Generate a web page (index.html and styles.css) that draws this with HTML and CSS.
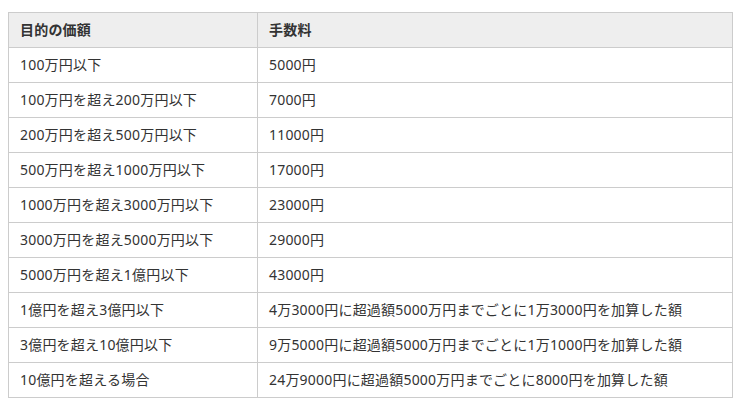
FILE: index.html
```html
<!DOCTYPE html>
<html lang="ja">
<head>
<meta charset="utf-8">
<link rel="stylesheet" href="styles.css">
</head>
<body>
<table class="fee-table">
  <thead>
    <tr><th class="col1">目的の価額</th><th>手数料</th></tr>
  </thead>
  <tbody>
    <tr><td>100万円以下</td><td>5000円</td></tr>
    <tr><td>100万円を超え200万円以下</td><td>7000円</td></tr>
    <tr><td>200万円を超え500万円以下</td><td>11000円</td></tr>
    <tr><td>500万円を超え1000万円以下</td><td>17000円</td></tr>
    <tr><td>1000万円を超え3000万円以下</td><td>23000円</td></tr>
    <tr><td>3000万円を超え5000万円以下</td><td>29000円</td></tr>
    <tr><td>5000万円を超え1億円以下</td><td>43000円</td></tr>
    <tr><td>1億円を超え3億円以下</td><td>4万3000円に超過額5000万円までごとに1万3000円を加算した額</td></tr>
    <tr><td>3億円を超え10億円以下</td><td>9万5000円に超過額5000万円までごとに1万1000円を加算した額</td></tr>
    <tr><td>10億円を超える場合</td><td>24万9000円に超過額5000万円までごとに8000円を加算した額</td></tr>
  </tbody>
</table>
</body>
</html>
```

FILE: styles.css
```css
body {
  margin: 12px 8px;
  background: #fff;
  font-family: "Noto Sans", "Noto Sans CJK JP", sans-serif;
  color: #333;
}
.fee-table {
  width: 725px;
  border-collapse: collapse;
  font-size: 14px;
  letter-spacing: 0.2px;
}
.fee-table th,
.fee-table td {
  border: 1px solid #ccc;
  height: 34px;
  padding: 0 11px;
  text-align: left;
  vertical-align: middle;
  line-height: 20px;
}
.fee-table th {
  background: #eee;
  font-weight: bold;
}
.fee-table .col1 {
  width: 226px;
}
```
